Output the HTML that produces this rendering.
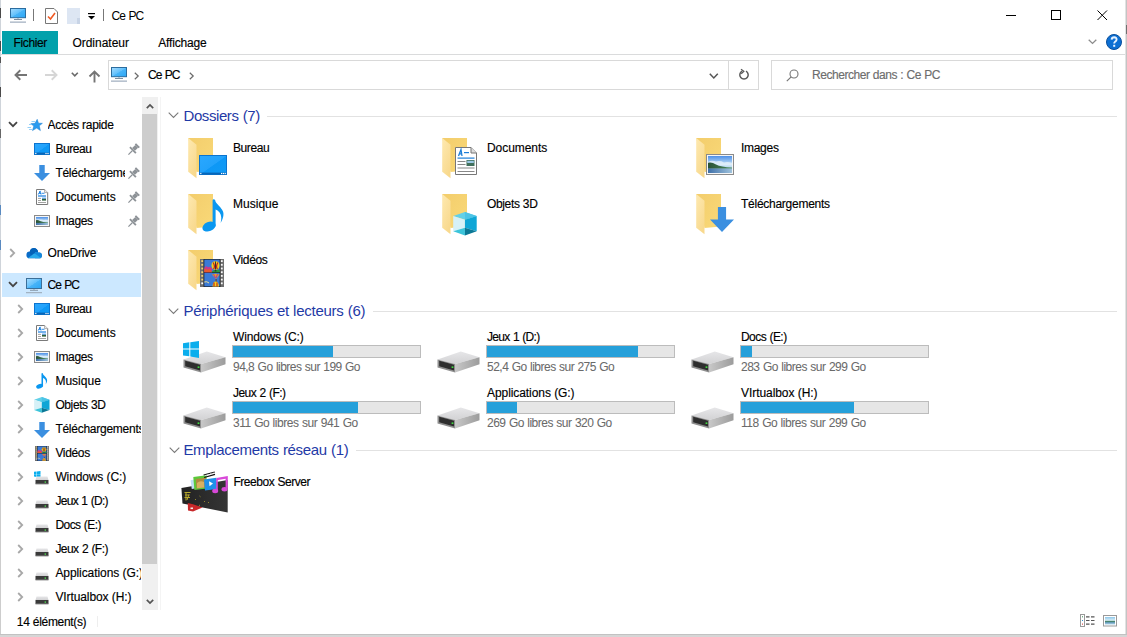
<!DOCTYPE html>
<html><head><meta charset="utf-8">
<style>
html,body{margin:0;padding:0;}
body{width:1127px;height:637px;overflow:hidden;position:relative;background:#fff;font-family:"Liberation Sans",sans-serif;}
.t{position:absolute;white-space:nowrap;-webkit-text-stroke:0.15px currentColor;}
.a{position:absolute;}
svg{position:absolute;overflow:visible;z-index:1;}
</style></head><body>
<!-- window borders -->
<div class="a" style="left:0;top:0;width:1px;height:637px;background:#cdcdcd"></div><div class="a" style="left:0;top:0;width:1px;height:300px;background:#cfd4da"></div>
<div class="a" style="left:0;top:8px;width:1px;height:10px;background:#4a4a4a"></div>
<div class="a" style="left:0;top:41px;width:1px;height:10px;background:#4a4a4a"></div>
<div class="a" style="left:0;top:57px;width:1px;height:6px;background:#555"></div>
<div class="a" style="left:0;top:87px;width:1px;height:10px;background:#4a4a4a"></div>
<div class="a" style="left:0;top:129px;width:1px;height:9px;background:#666"></div>
<div class="a" style="left:0;top:205px;width:1px;height:10px;background:#5a8ac0"></div>
<div class="a" style="left:0;top:240px;width:1px;height:10px;background:#5a8ac0"></div>
<div class="a" style="left:1125px;top:0;width:1px;height:637px;background:#e2e2e2"></div><div class="a" style="left:1126px;top:0;width:1px;height:637px;background:#c4c4c4"></div><div class="a" style="left:1126px;top:25px;width:1px;height:9px;background:#707070"></div>
<div class="a" style="left:0;top:634px;width:1127px;height:1px;background:#c2c2c2"></div><div class="a" style="left:0;top:635px;width:1127px;height:2px;background:#d6d6d6"></div>
<!-- title bar icons -->
<svg style="left:10px;top:8px" width="17" height="15" viewBox="0 0 17 15">
  <defs><linearGradient id="scr" x1="0" y1="0" x2="1" y2="1"><stop offset="0" stop-color="#a6dcff"/><stop offset="0.5" stop-color="#62c0fb"/><stop offset="0.52" stop-color="#48b4f8"/><stop offset="1" stop-color="#2aa6f5"/></linearGradient></defs>
  <rect x="0.5" y="0.5" width="15" height="9.2" fill="url(#scr)" stroke="#2b6c9e"/>
  <rect x="7" y="10.4" width="2" height="0.6" fill="#9fb0c0"/>
  <rect x="4" y="11" width="8" height="0.9" fill="#6f8295"/>
  <rect x="0" y="13.6" width="16" height="1" fill="#8a9bb0"/>
</svg>
<div class="a" style="left:33px;top:9px;width:1px;height:12px;background:#777"></div>
<svg style="left:45px;top:8px" width="13" height="16" viewBox="0 0 13 16">
  <path d="M0.5 0.5H9L12.5 4V15.5H0.5Z" fill="#fff" stroke="#777"/>
  <path d="M3 8.5L5.5 11L10 5" fill="none" stroke="#f05a24" stroke-width="1.6"/>
</svg>
<svg style="left:67px;top:8px" width="14" height="16" viewBox="0 0 14 16">
  <rect x="0" y="0" width="13" height="16" fill="#dde6f3"/>
  <rect x="10" y="10" width="3" height="6" fill="#c8d4e6"/>
</svg>
<svg style="left:88px;top:13px" width="8" height="8" viewBox="0 0 8 8">
  <rect x="0" y="0" width="7" height="1.2" fill="#000"/>
  <path d="M0 3H7L3.5 6.5Z" fill="#000"/>
</svg>
<div class="a" style="left:103px;top:9px;width:1px;height:12px;background:#777"></div>
<!-- window controls -->
<div class="a" style="left:1006px;top:15px;width:10px;height:1px;background:#000"></div>
<div class="a" style="left:1051px;top:10px;width:8px;height:8px;border:1px solid #000"></div>
<svg style="left:1097px;top:10px" width="11" height="11" viewBox="0 0 11 11"><path d="M0.5 0.5L10 10M10 0.5L0.5 10" stroke="#000" stroke-width="1"/></svg>
<!-- ribbon -->
<div class="a" style="left:2px;top:31px;width:56px;height:23px;background:#02a1ab"></div>
<div class="a" style="left:1px;top:54px;width:1124px;height:1px;background:#dadbdc"></div>
<svg style="left:1087.5px;top:38.6px" width="10" height="6" viewBox="0 0 10 6"><path d="M0.7 0.7L4.5 4.4L8.3 0.7" fill="none" stroke="#8c8c8c" stroke-width="1.3"/></svg>
<svg style="left:1106px;top:34px" width="16" height="16" viewBox="0 0 16 16">
  <circle cx="8" cy="8" r="7.5" fill="#0d6fd3" stroke="#0a4f9c" stroke-width="1"/>
  <path d="M5.6 5.6Q5.8 3.2 8.2 3.2Q10.6 3.3 10.6 5.5Q10.6 7 8.9 7.9Q8.2 8.4 8.2 9.6" fill="none" stroke="#e6f2ff" stroke-width="1.9"/>
  <rect x="7.2" y="10.8" width="2" height="2" fill="#e6f2ff"/>
</svg>
<!-- address bar -->
<svg style="left:14px;top:69px" width="14" height="12" viewBox="0 0 14 12"><path d="M13 6H2M6.3 1.3L1.5 6L6.3 10.7" fill="none" stroke="#757575" stroke-width="1.9"/></svg>
<svg style="left:44px;top:69px" width="14" height="12" viewBox="0 0 14 12"><path d="M1 6H12M7.7 1.3L12.5 6L7.7 10.7" fill="none" stroke="#d6d6d6" stroke-width="1.9"/></svg>
<svg style="left:71px;top:72px" width="8" height="5" viewBox="0 0 8 5"><path d="M0.8 0.8L3.8 3.8L6.8 0.8" fill="none" stroke="#6a6a6a" stroke-width="1.6"/></svg>
<svg style="left:88px;top:69.5px" width="13" height="13" viewBox="0 0 13 13"><path d="M6.5 12.4V2M1.5 6.5L6.5 1.5L11.5 6.5" fill="none" stroke="#757575" stroke-width="1.9"/></svg>
<div class="a" style="left:108px;top:60px;width:649px;height:28px;border:1px solid #d9d9d9"></div>
<div class="a" style="left:728px;top:61px;width:1px;height:28px;background:#d9d9d9"></div>
<svg style="left:111px;top:67px" width="17" height="15" viewBox="0 0 17 15">
  <rect x="0.5" y="0.5" width="15" height="9.2" fill="url(#scr)" stroke="#2b6c9e"/>
  <rect x="7" y="10.4" width="2" height="0.6" fill="#9fb0c0"/>
  <rect x="4" y="11" width="8" height="0.9" fill="#6f8295"/>
  <rect x="0" y="13.6" width="16" height="1" fill="#8a9bb0"/>
</svg>
<svg style="left:134px;top:72px" width="6" height="8" viewBox="0 0 6 8"><path d="M0.8 0.8L4.2 4L0.8 7.2" fill="none" stroke="#6a6a6a" stroke-width="1.2"/></svg>
<svg style="left:189px;top:72px" width="6" height="8" viewBox="0 0 6 8"><path d="M0.8 0.8L4.2 4L0.8 7.2" fill="none" stroke="#6a6a6a" stroke-width="1.2"/></svg>
<svg style="left:709px;top:73px" width="10" height="6" viewBox="0 0 10 6"><path d="M0.8 0.8L4.8 5L8.8 0.8" fill="none" stroke="#555" stroke-width="1.5"/></svg>
<svg style="left:738px;top:69px" width="12" height="12" viewBox="0 0 12 12"><path d="M4 2.2A4.2 4.2 0 1 0 8 2.2" fill="none" stroke="#5a5a5a" stroke-width="1.5"/><path d="M3 0.3L5.8 2.3L3.2 4.8" fill="none" stroke="#5a5a5a" stroke-width="1.3"/></svg>
<div class="a" style="left:771px;top:60px;width:340px;height:28px;border:1px solid #d9d9d9"></div>
<svg style="left:786px;top:69px" width="13" height="13" viewBox="0 0 13 13"><circle cx="8" cy="5" r="4" fill="none" stroke="#777" stroke-width="1.1"/><path d="M5.2 7.8L0.8 12.2" stroke="#777" stroke-width="1.2"/></svg>
<!-- nav pane scrollbar -->
<div class="a" style="left:142px;top:97px;width:16px;height:513px;background:#f0f0f0"></div>
<div class="a" style="left:142px;top:113.5px;width:15px;height:450px;background:#cdcdcd"></div>
<svg style="left:146px;top:103.5px" width="8" height="5" viewBox="0 0 8 5"><path d="M0.8 4.2L4 1L7.2 4.2" fill="none" stroke="#555" stroke-width="1.7"/></svg>
<svg style="left:146px;top:599px" width="8" height="5" viewBox="0 0 8 5"><path d="M0.8 0.8L4 4L7.2 0.8" fill="none" stroke="#555" stroke-width="1.7"/></svg>
<div class="a" style="left:160px;top:97px;width:1px;height:513px;background:#f4f4f4"></div>
<!-- selection -->
<div class="a" style="left:2px;top:273px;width:139px;height:24px;background:#cce8ff"></div>
<!-- status bar -->
<div class="a" style="left:97px;top:616px;width:1px;height:11px;background:#eeeeee"></div>
<svg width="0" height="0" style="left:0;top:0"><defs>
<linearGradient id="fback" x1="0" y1="0" x2="1" y2="1"><stop offset="0" stop-color="#f3cd6c"/><stop offset="1" stop-color="#f9d978"/></linearGradient>
<linearGradient id="ffront" x1="0" y1="0" x2="0.6" y2="1"><stop offset="0" stop-color="#fee9b0"/><stop offset="1" stop-color="#f8d98e"/></linearGradient>
<linearGradient id="blue" x1="0" y1="0" x2="1" y2="1"><stop offset="0" stop-color="#2aa8ff"/><stop offset="0.5" stop-color="#22a2fb"/><stop offset="0.52" stop-color="#0e98f6"/><stop offset="1" stop-color="#0f9af4"/></linearGradient>
<linearGradient id="land" x1="0" y1="0" x2="0" y2="1"><stop offset="0" stop-color="#8ec7ea"/><stop offset="0.45" stop-color="#d9eef7"/><stop offset="0.55" stop-color="#3d7b55"/><stop offset="0.75" stop-color="#6aa0c0"/><stop offset="1" stop-color="#b6d6ea"/></linearGradient>
<linearGradient id="sky" x1="0" y1="0" x2="0" y2="1"><stop offset="0" stop-color="#4d90e8"/><stop offset="0.45" stop-color="#b8d8f4"/><stop offset="1" stop-color="#d8eaf6"/></linearGradient><linearGradient id="hill" x1="0" y1="0" x2="1" y2="0"><stop offset="0" stop-color="#2a5236"/><stop offset="1" stop-color="#4a8a5a"/></linearGradient><linearGradient id="water" x1="0" y1="0" x2="1" y2="0"><stop offset="0" stop-color="#3e6fa8"/><stop offset="1" stop-color="#9fc2dc"/></linearGradient>
<linearGradient id="dtop" x1="0" y1="0" x2="0" y2="1"><stop offset="0" stop-color="#e6e6e8"/><stop offset="1" stop-color="#d2d2d4"/></linearGradient>
<linearGradient id="dside" x1="0" y1="0" x2="1" y2="0"><stop offset="0" stop-color="#c8c8c8"/><stop offset="1" stop-color="#9c9c9c"/></linearGradient>
<linearGradient id="cloud" x1="0" y1="0" x2="0" y2="1"><stop offset="0" stop-color="#0364b8"/><stop offset="1" stop-color="#1490df"/></linearGradient>
</defs></svg>
<svg style="left:8px;top:121.3px" width="10" height="7" viewBox="0 0 10 7"><path d="M1 1.2L5 5.2L9 1.2" fill="none" stroke="#454545" stroke-width="1.8"/></svg>
<svg style="left:27px;top:119px" width="16" height="13" viewBox="0 0 16 13"><path d="M10.2 0.3L11.5 4.2L15.4 4.3L12.3 6.8L13.4 11.6L9.7 9.1L5.5 11.6L6.8 7.1L3.8 4.7L8 4.3Z" fill="#2a9bef" stroke="#1d7fd0" stroke-width="0.5"/><path d="M4.5 2.5H8M2 5.5H5M0.5 8.5H4M2 10.5H5" stroke="#7cc4f5" stroke-width="0.8"/></svg>
<svg style="left:34px;top:143px" width="16" height="12" viewBox="0 0 16 12"><rect x="0.5" y="0.5" width="15" height="11" fill="url(#blue)" stroke="#0b74cf"/><rect x="1" y="9.6" width="14" height="1.9" fill="#0866b8"/><rect x="1.2" y="9.9" width="1.2" height="1.2" fill="#fff"/><rect x="11.4" y="9.9" width="1.2" height="1.2" fill="#fff"/><rect x="13.4" y="9.9" width="1.2" height="1.2" fill="#fff"/></svg>
<svg style="left:125.5px;top:143.0px" width="14" height="14" viewBox="0 0 14 14"><g transform="rotate(45 7 7)" fill="#8d9297"><rect x="4.3" y="0" width="5.4" height="1.8"/><rect x="5" y="1.8" width="4" height="4.4"/><rect x="2.8" y="6.2" width="8.4" height="1.8"/><rect x="6.4" y="8" width="1.2" height="5.5"/></g></svg>
<svg style="left:34px;top:165px" width="16" height="16" viewBox="0 0 16 16"><path d="M5.279999999999999 0H10.72V8.0H16L8.0 16L0 8.0H5.279999999999999Z" fill="#3b8fe0"/></svg>
<svg style="left:125.5px;top:167.0px" width="14" height="14" viewBox="0 0 14 14"><g transform="rotate(45 7 7)" fill="#8d9297"><rect x="4.3" y="0" width="5.4" height="1.8"/><rect x="5" y="1.8" width="4" height="4.4"/><rect x="2.8" y="6.2" width="8.4" height="1.8"/><rect x="6.4" y="8" width="1.2" height="5.5"/></g></svg>
<svg style="left:36px;top:189px" width="12.5" height="16" viewBox="0 0 12.5 16"><path d="M0.5 0.5H8.6L11.7 3.6V15.5H0.5Z" fill="#fff" stroke="#7a7a7a"/><path d="M8.6 0.5V3.6H11.7" fill="#eee" stroke="#9a9a9a" stroke-width="0.8"/><path d="M2.2 5.5L4.6 1.8M3.6 2L5 5.5M2.8 4.2H4.6" stroke="#1a7fe0" stroke-width="1" fill="none"/><rect x="5.5" y="3.8" width="3" height="0.9" fill="#1a7fe0"/><rect x="2" y="6.4" width="8" height="1.2" fill="#1a7fe0"/><rect x="2" y="8.9" width="3" height="0.9" fill="#999"/><rect x="2" y="11" width="3" height="0.9" fill="#999"/><rect x="6" y="8.6" width="4" height="1.2" fill="#5aa0f0"/><rect x="6" y="9.8" width="4" height="1.8" fill="#2f5f3a"/><rect x="2" y="13" width="8" height="0.9" fill="#999"/></svg>
<svg style="left:125.5px;top:191.0px" width="14" height="14" viewBox="0 0 14 14"><g transform="rotate(45 7 7)" fill="#8d9297"><rect x="4.3" y="0" width="5.4" height="1.8"/><rect x="5" y="1.8" width="4" height="4.4"/><rect x="2.8" y="6.2" width="8.4" height="1.8"/><rect x="6.4" y="8" width="1.2" height="5.5"/></g></svg>
<svg style="left:34px;top:215px" width="16" height="12" viewBox="0 0 16 12"><rect x="0.5" y="0.5" width="15" height="11" fill="#f6f6f6" stroke="#8a8a8a"/><g transform="translate(2 2) scale(1.0,1.0)"><rect x="0" y="0" width="12" height="8" fill="url(#sky)"/><path d="M0 2.8Q2 1.8 4 2.6Q6 2 8 3Q10 2.6 12 3.2V4.5H0Z" fill="#e6f1fa" opacity="0.8"/><path d="M0 3.2Q2 2.8 4 4Q6.5 5.2 12 5.4V6H0Z" fill="url(#hill)"/><rect x="0" y="5.9" width="12" height="2.1" fill="url(#water)"/></g></svg>
<svg style="left:125.5px;top:215.0px" width="14" height="14" viewBox="0 0 14 14"><g transform="rotate(45 7 7)" fill="#8d9297"><rect x="4.3" y="0" width="5.4" height="1.8"/><rect x="5" y="1.8" width="4" height="4.4"/><rect x="2.8" y="6.2" width="8.4" height="1.8"/><rect x="6.4" y="8" width="1.2" height="5.5"/></g></svg>
<svg style="left:8.9px;top:248.1px" width="7" height="10" viewBox="0 0 7 10"><path d="M1.2 1L5.2 5L1.2 9" fill="none" stroke="#a8a8a8" stroke-width="1.8"/></svg>
<svg style="left:26px;top:247.5px" width="17" height="11" viewBox="0 0 17 11"><defs><clipPath id="cc"><circle cx="3.8" cy="6.9" r="3.4"/><circle cx="7.9" cy="4.3" r="4.2"/><circle cx="13" cy="7.4" r="2.9"/><rect x="3.8" y="6" width="9.2" height="4.3"/></clipPath></defs><g clip-path="url(#cc)"><rect x="0" y="0" width="17" height="11" fill="#0a6cc8"/><circle cx="8" cy="4.3" r="4.2" fill="#0562b8"/><rect x="9" y="4" width="8" height="7" fill="#1488dc"/><path d="M1.5 10.5L8.4 5.2L15.5 10.5Z" fill="#28a8ea"/></g></svg>
<svg style="left:8px;top:281.3px" width="10" height="7" viewBox="0 0 10 7"><path d="M1 1.2L5 5.2L9 1.2" fill="none" stroke="#454545" stroke-width="1.8"/></svg>
<svg style="left:26px;top:277.5px" width="17" height="16" viewBox="0 0 17 16"><rect x="0.5" y="0.5" width="15" height="10" fill="url(#scr)" stroke="#3b6f99"/><rect x="7" y="11.2" width="2" height="0.6" fill="#9fb0c0"/><rect x="4" y="11.8" width="8" height="0.9" fill="#7e8f9f"/><rect x="0" y="14.2" width="16" height="1" fill="#98a6b4"/></svg>
<svg style="left:16.9px;top:304.1px" width="7" height="10" viewBox="0 0 7 10"><path d="M1.2 1L5.2 5L1.2 9" fill="none" stroke="#a8a8a8" stroke-width="1.8"/></svg>
<svg style="left:16.9px;top:328.1px" width="7" height="10" viewBox="0 0 7 10"><path d="M1.2 1L5.2 5L1.2 9" fill="none" stroke="#a8a8a8" stroke-width="1.8"/></svg>
<svg style="left:16.9px;top:352.1px" width="7" height="10" viewBox="0 0 7 10"><path d="M1.2 1L5.2 5L1.2 9" fill="none" stroke="#a8a8a8" stroke-width="1.8"/></svg>
<svg style="left:16.9px;top:376.1px" width="7" height="10" viewBox="0 0 7 10"><path d="M1.2 1L5.2 5L1.2 9" fill="none" stroke="#a8a8a8" stroke-width="1.8"/></svg>
<svg style="left:16.9px;top:400.1px" width="7" height="10" viewBox="0 0 7 10"><path d="M1.2 1L5.2 5L1.2 9" fill="none" stroke="#a8a8a8" stroke-width="1.8"/></svg>
<svg style="left:16.9px;top:424.1px" width="7" height="10" viewBox="0 0 7 10"><path d="M1.2 1L5.2 5L1.2 9" fill="none" stroke="#a8a8a8" stroke-width="1.8"/></svg>
<svg style="left:16.9px;top:448.1px" width="7" height="10" viewBox="0 0 7 10"><path d="M1.2 1L5.2 5L1.2 9" fill="none" stroke="#a8a8a8" stroke-width="1.8"/></svg>
<svg style="left:16.9px;top:472.1px" width="7" height="10" viewBox="0 0 7 10"><path d="M1.2 1L5.2 5L1.2 9" fill="none" stroke="#a8a8a8" stroke-width="1.8"/></svg>
<svg style="left:16.9px;top:496.1px" width="7" height="10" viewBox="0 0 7 10"><path d="M1.2 1L5.2 5L1.2 9" fill="none" stroke="#a8a8a8" stroke-width="1.8"/></svg>
<svg style="left:16.9px;top:520.1px" width="7" height="10" viewBox="0 0 7 10"><path d="M1.2 1L5.2 5L1.2 9" fill="none" stroke="#a8a8a8" stroke-width="1.8"/></svg>
<svg style="left:16.9px;top:544.1px" width="7" height="10" viewBox="0 0 7 10"><path d="M1.2 1L5.2 5L1.2 9" fill="none" stroke="#a8a8a8" stroke-width="1.8"/></svg>
<svg style="left:16.9px;top:568.1px" width="7" height="10" viewBox="0 0 7 10"><path d="M1.2 1L5.2 5L1.2 9" fill="none" stroke="#a8a8a8" stroke-width="1.8"/></svg>
<svg style="left:16.9px;top:592.1px" width="7" height="10" viewBox="0 0 7 10"><path d="M1.2 1L5.2 5L1.2 9" fill="none" stroke="#a8a8a8" stroke-width="1.8"/></svg>
<svg style="left:34px;top:303px" width="16" height="12" viewBox="0 0 16 12"><rect x="0.5" y="0.5" width="15" height="11" fill="url(#blue)" stroke="#0b74cf"/><rect x="1" y="9.6" width="14" height="1.9" fill="#0866b8"/><rect x="1.2" y="9.9" width="1.2" height="1.2" fill="#fff"/><rect x="11.4" y="9.9" width="1.2" height="1.2" fill="#fff"/><rect x="13.4" y="9.9" width="1.2" height="1.2" fill="#fff"/></svg>
<svg style="left:36px;top:325px" width="12.5" height="16" viewBox="0 0 12.5 16"><path d="M0.5 0.5H8.6L11.7 3.6V15.5H0.5Z" fill="#fff" stroke="#7a7a7a"/><path d="M8.6 0.5V3.6H11.7" fill="#eee" stroke="#9a9a9a" stroke-width="0.8"/><path d="M2.2 5.5L4.6 1.8M3.6 2L5 5.5M2.8 4.2H4.6" stroke="#1a7fe0" stroke-width="1" fill="none"/><rect x="5.5" y="3.8" width="3" height="0.9" fill="#1a7fe0"/><rect x="2" y="6.4" width="8" height="1.2" fill="#1a7fe0"/><rect x="2" y="8.9" width="3" height="0.9" fill="#999"/><rect x="2" y="11" width="3" height="0.9" fill="#999"/><rect x="6" y="8.6" width="4" height="1.2" fill="#5aa0f0"/><rect x="6" y="9.8" width="4" height="1.8" fill="#2f5f3a"/><rect x="2" y="13" width="8" height="0.9" fill="#999"/></svg>
<svg style="left:34px;top:351px" width="16" height="12" viewBox="0 0 16 12"><rect x="0.5" y="0.5" width="15" height="11" fill="#f6f6f6" stroke="#8a8a8a"/><g transform="translate(2 2) scale(1.0,1.0)"><rect x="0" y="0" width="12" height="8" fill="url(#sky)"/><path d="M0 2.8Q2 1.8 4 2.6Q6 2 8 3Q10 2.6 12 3.2V4.5H0Z" fill="#e6f1fa" opacity="0.8"/><path d="M0 3.2Q2 2.8 4 4Q6.5 5.2 12 5.4V6H0Z" fill="url(#hill)"/><rect x="0" y="5.9" width="12" height="2.1" fill="url(#water)"/></g></svg>
<svg style="left:35.6px;top:373.2px" width="11.4" height="15.8" viewBox="0 0 11.4 15.8"><g transform="scale(0.5181818181818182,0.4787878787878788)"><ellipse cx="7" cy="27.6" rx="6.9" ry="4.6" fill="#0a97f0" transform="rotate(-22 7 27.6)"/><path d="M10.6 27.5V1.6Q10.6 0.2 12 0.2Q13.4 0.2 13.6 2.8C15 5.5 19 8 21 12.5C22.2 15.5 21 20.5 18.6 23.9C19.6 20 19.6 16.5 17.6 13.5C16.4 11.8 14.8 10.8 13.6 10.4V27.5Z" fill="#0a97f0"/></g></svg>
<svg style="left:33.7px;top:397px" width="16" height="16" viewBox="0 0 16 16"><g transform="scale(0.64,0.6666666666666666)"><path d="M0.2 4L12.2 0.1L24.2 4L12.2 7.8Z" fill="#62d0e8"/><path d="M12.2 0.1L24.2 4L12.2 7.8Z" fill="#4cc4e6"/><path d="M0.2 4L12.2 7.8V16L0.2 19.4Z" fill="#d6f1f7"/><path d="M12.2 7.8L24.2 4V19.4L12.2 16Z" fill="#0ea6d6"/><path d="M0.2 19.4L12.2 16V23.6Z" fill="#3cc4da"/><path d="M12.2 16L24.2 19.4L12.2 23.6Z" fill="#0b7896"/></g></svg>
<svg style="left:34px;top:421.5px" width="16" height="16" viewBox="0 0 16 16"><path d="M5.279999999999999 0H10.72V8.0H16L8.0 16L0 8.0H5.279999999999999Z" fill="#3b8fe0"/></svg>
<svg style="left:35px;top:446px" width="14" height="15" viewBox="0 0 14 15"><g transform="scale(0.5833333333333334,0.5357142857142857)"><rect x="0" y="0" width="24" height="28" fill="#6e6e6e"/><rect x="3.6" y="0" width="16.8" height="28" fill="#1a1a1a"/><rect x="1.3" y="1.2" width="1.8" height="1.8" fill="#f0d070"/><rect x="20.9" y="1.2" width="1.8" height="1.8" fill="#fafafa"/><rect x="1.3" y="4.9" width="1.8" height="1.8" fill="#f0d070"/><rect x="20.9" y="4.9" width="1.8" height="1.8" fill="#fafafa"/><rect x="1.3" y="8.6" width="1.8" height="1.8" fill="#f0d070"/><rect x="20.9" y="8.6" width="1.8" height="1.8" fill="#fafafa"/><rect x="1.3" y="12.3" width="1.8" height="1.8" fill="#f0d070"/><rect x="20.9" y="12.3" width="1.8" height="1.8" fill="#fafafa"/><rect x="1.3" y="16.0" width="1.8" height="1.8" fill="#f0d070"/><rect x="20.9" y="16.0" width="1.8" height="1.8" fill="#fafafa"/><rect x="1.3" y="19.7" width="1.8" height="1.8" fill="#f0d070"/><rect x="20.9" y="19.7" width="1.8" height="1.8" fill="#fafafa"/><rect x="1.3" y="23.400000000000002" width="1.8" height="1.8" fill="#fff"/><rect x="20.9" y="23.400000000000002" width="1.8" height="1.8" fill="#fafafa"/><rect x="4.3" y="0.6" width="15.4" height="12.6" fill="#3b7ad6"/><rect x="4.3" y="14" width="15.4" height="13.4" fill="#3b7ad6"/><path d="M4.3 9Q6 6 8 8.5Q10 6.5 12 9.5L12 13.2H4.3Z" fill="#c83a8a"/><path d="M4.3 10.5Q6 9 7 11L9 10Q11 11 12 13.2H4.3Z" fill="#e85a2a"/><path d="M11 13.2Q14 10 19.7 11V13.2Z" fill="#2a9a3a"/><ellipse cx="15.5" cy="6.5" rx="4" ry="4.2" fill="#f0d020"/><path d="M13.2 3.5Q15.5 8 13.5 10M17.8 3.5Q15.5 8 17.5 10" stroke="#c02020" stroke-width="1.2" fill="none"/><rect x="15" y="2.5" width="1" height="8" fill="#333"/><rect x="14.8" y="11" width="1.5" height="1.5" fill="#333"/><path d="M12 15.5Q15.5 14 19.5 15.5L16 20Z" fill="#e8a020"/><path d="M13.5 15.2L15.5 19M17.5 15.2L16 19" stroke="#a020c0" stroke-width="0.9"/><rect x="15.6" y="20" width="1" height="3" fill="#6a3a20"/><path d="M4.3 23Q7 22 9 24" stroke="#f0e090" stroke-width="1" fill="none"/><path d="M12.5 27.4Q13 22.5 15.5 22.5Q18.5 22.5 19 27.4Z" fill="#f0d020"/><path d="M14 23.5V27.4M17 23.5V27.4" stroke="#c02020" stroke-width="1.1"/></g></svg>
<svg style="left:33.8px;top:471px" width="6.5" height="6.6" viewBox="0 0 6.5 6.6"><g transform="scale(0.40625,0.388235294117647)"><path d="M0 2.2L6.3 1.3V7.6H0Z" fill="#0aaeed"/><path d="M7.3 1.2L16 0V7.6H7.3Z" fill="#0aaeed"/><path d="M0 8.6H6.3V15.3L0 14.5Z" fill="#0aaeed"/><path d="M7.3 8.6H16V17L7.3 15.5Z" fill="#0aaeed"/></g></svg>
<svg style="left:35px;top:476px" width="14" height="9" viewBox="0 0 14 9"><path d="M1.5 0.5H12.5L13.5 4H0.5Z" fill="url(#dtop)"/><rect x="0.5" y="4" width="13" height="4" fill="#3a3a3a"/><rect x="0.5" y="7.6" width="13" height="0.9" fill="#9a9a9a"/><rect x="9.6" y="5.4" width="1.4" height="1.4" fill="#4fd64f"/></svg>
<svg style="left:35px;top:500px" width="14" height="9" viewBox="0 0 14 9"><path d="M1.5 0.5H12.5L13.5 4H0.5Z" fill="url(#dtop)"/><rect x="0.5" y="4" width="13" height="4" fill="#3a3a3a"/><rect x="0.5" y="7.6" width="13" height="0.9" fill="#9a9a9a"/><rect x="9.6" y="5.4" width="1.4" height="1.4" fill="#4fd64f"/></svg>
<svg style="left:35px;top:524px" width="14" height="9" viewBox="0 0 14 9"><path d="M1.5 0.5H12.5L13.5 4H0.5Z" fill="url(#dtop)"/><rect x="0.5" y="4" width="13" height="4" fill="#3a3a3a"/><rect x="0.5" y="7.6" width="13" height="0.9" fill="#9a9a9a"/><rect x="9.6" y="5.4" width="1.4" height="1.4" fill="#4fd64f"/></svg>
<svg style="left:35px;top:548px" width="14" height="9" viewBox="0 0 14 9"><path d="M1.5 0.5H12.5L13.5 4H0.5Z" fill="url(#dtop)"/><rect x="0.5" y="4" width="13" height="4" fill="#3a3a3a"/><rect x="0.5" y="7.6" width="13" height="0.9" fill="#9a9a9a"/><rect x="9.6" y="5.4" width="1.4" height="1.4" fill="#4fd64f"/></svg>
<svg style="left:35px;top:572px" width="14" height="9" viewBox="0 0 14 9"><path d="M1.5 0.5H12.5L13.5 4H0.5Z" fill="url(#dtop)"/><rect x="0.5" y="4" width="13" height="4" fill="#3a3a3a"/><rect x="0.5" y="7.6" width="13" height="0.9" fill="#9a9a9a"/><rect x="9.6" y="5.4" width="1.4" height="1.4" fill="#4fd64f"/></svg>
<svg style="left:35px;top:596px" width="14" height="9" viewBox="0 0 14 9"><path d="M1.5 0.5H12.5L13.5 4H0.5Z" fill="url(#dtop)"/><rect x="0.5" y="4" width="13" height="4" fill="#3a3a3a"/><rect x="0.5" y="7.6" width="13" height="0.9" fill="#9a9a9a"/><rect x="9.6" y="5.4" width="1.4" height="1.4" fill="#4fd64f"/></svg>
<svg style="left:187.6px;top:138px" width="26" height="41" viewBox="0 0 26 41"><path d="M0.2 0H25V32.5L8.5 34Z" fill="url(#fback)"/><path d="M0.2 0L8.5 6.7V40.3L0.2 33.7Z" fill="url(#ffront)"/></svg>
<svg style="left:441.6px;top:138px" width="26" height="41" viewBox="0 0 26 41"><path d="M0.2 0H25V32.5L8.5 34Z" fill="url(#fback)"/><path d="M0.2 0L8.5 6.7V40.3L0.2 33.7Z" fill="url(#ffront)"/></svg>
<svg style="left:695.6px;top:138px" width="26" height="41" viewBox="0 0 26 41"><path d="M0.2 0H25V32.5L8.5 34Z" fill="url(#fback)"/><path d="M0.2 0L8.5 6.7V40.3L0.2 33.7Z" fill="url(#ffront)"/></svg>
<svg style="left:187.6px;top:194px" width="26" height="41" viewBox="0 0 26 41"><path d="M0.2 0H25V32.5L8.5 34Z" fill="url(#fback)"/><path d="M0.2 0L8.5 6.7V40.3L0.2 33.7Z" fill="url(#ffront)"/></svg>
<svg style="left:441.6px;top:194px" width="26" height="41" viewBox="0 0 26 41"><path d="M0.2 0H25V32.5L8.5 34Z" fill="url(#fback)"/><path d="M0.2 0L8.5 6.7V40.3L0.2 33.7Z" fill="url(#ffront)"/></svg>
<svg style="left:695.6px;top:194px" width="26" height="41" viewBox="0 0 26 41"><path d="M0.2 0H25V32.5L8.5 34Z" fill="url(#fback)"/><path d="M0.2 0L8.5 6.7V40.3L0.2 33.7Z" fill="url(#ffront)"/></svg>
<svg style="left:187.6px;top:250px" width="26" height="41" viewBox="0 0 26 41"><path d="M0.2 0H25V32.5L8.5 34Z" fill="url(#fback)"/><path d="M0.2 0L8.5 6.7V40.3L0.2 33.7Z" fill="url(#ffront)"/></svg>
<svg style="left:199px;top:155px" width="28" height="20" viewBox="0 0 28 20"><rect x="0.5" y="0.5" width="27" height="19" fill="url(#blue)" stroke="#0b74cf"/><rect x="1" y="17.6" width="26" height="1.9" fill="#0866b8"/><rect x="1.2" y="17.9" width="1.2" height="1.2" fill="#fff"/><rect x="22" y="17.9" width="1.2" height="1.2" fill="#fff"/><rect x="23.8" y="17.9" width="1.2" height="1.2" fill="#fff"/><rect x="25.6" y="17.9" width="1.2" height="1.2" fill="#fff"/></svg>
<svg style="left:201.5px;top:198.7px" width="22" height="33" viewBox="0 0 22 33"><g transform="scale(1.0,1.0)"><ellipse cx="7" cy="27.6" rx="6.9" ry="4.6" fill="#0a97f0" transform="rotate(-22 7 27.6)"/><path d="M10.6 27.5V1.6Q10.6 0.2 12 0.2Q13.4 0.2 13.6 2.8C15 5.5 19 8 21 12.5C22.2 15.5 21 20.5 18.6 23.9C19.6 20 19.6 16.5 17.6 13.5C16.4 11.8 14.8 10.8 13.6 10.4V27.5Z" fill="#0a97f0"/></g></svg>
<svg style="left:200px;top:259px" width="24" height="28" viewBox="0 0 24 28"><g transform="scale(1.0,1.0)"><rect x="0" y="0" width="24" height="28" fill="#6e6e6e"/><rect x="3.6" y="0" width="16.8" height="28" fill="#1a1a1a"/><rect x="1.3" y="1.2" width="1.8" height="1.8" fill="#f0d070"/><rect x="20.9" y="1.2" width="1.8" height="1.8" fill="#fafafa"/><rect x="1.3" y="4.9" width="1.8" height="1.8" fill="#f0d070"/><rect x="20.9" y="4.9" width="1.8" height="1.8" fill="#fafafa"/><rect x="1.3" y="8.6" width="1.8" height="1.8" fill="#f0d070"/><rect x="20.9" y="8.6" width="1.8" height="1.8" fill="#fafafa"/><rect x="1.3" y="12.3" width="1.8" height="1.8" fill="#f0d070"/><rect x="20.9" y="12.3" width="1.8" height="1.8" fill="#fafafa"/><rect x="1.3" y="16.0" width="1.8" height="1.8" fill="#f0d070"/><rect x="20.9" y="16.0" width="1.8" height="1.8" fill="#fafafa"/><rect x="1.3" y="19.7" width="1.8" height="1.8" fill="#f0d070"/><rect x="20.9" y="19.7" width="1.8" height="1.8" fill="#fafafa"/><rect x="1.3" y="23.400000000000002" width="1.8" height="1.8" fill="#fff"/><rect x="20.9" y="23.400000000000002" width="1.8" height="1.8" fill="#fafafa"/><rect x="4.3" y="0.6" width="15.4" height="12.6" fill="#3b7ad6"/><rect x="4.3" y="14" width="15.4" height="13.4" fill="#3b7ad6"/><path d="M4.3 9Q6 6 8 8.5Q10 6.5 12 9.5L12 13.2H4.3Z" fill="#c83a8a"/><path d="M4.3 10.5Q6 9 7 11L9 10Q11 11 12 13.2H4.3Z" fill="#e85a2a"/><path d="M11 13.2Q14 10 19.7 11V13.2Z" fill="#2a9a3a"/><ellipse cx="15.5" cy="6.5" rx="4" ry="4.2" fill="#f0d020"/><path d="M13.2 3.5Q15.5 8 13.5 10M17.8 3.5Q15.5 8 17.5 10" stroke="#c02020" stroke-width="1.2" fill="none"/><rect x="15" y="2.5" width="1" height="8" fill="#333"/><rect x="14.8" y="11" width="1.5" height="1.5" fill="#333"/><path d="M12 15.5Q15.5 14 19.5 15.5L16 20Z" fill="#e8a020"/><path d="M13.5 15.2L15.5 19M17.5 15.2L16 19" stroke="#a020c0" stroke-width="0.9"/><rect x="15.6" y="20" width="1" height="3" fill="#6a3a20"/><path d="M4.3 23Q7 22 9 24" stroke="#f0e090" stroke-width="1" fill="none"/><path d="M12.5 27.4Q13 22.5 15.5 22.5Q18.5 22.5 19 27.4Z" fill="#f0d020"/><path d="M14 23.5V27.4M17 23.5V27.4" stroke="#c02020" stroke-width="1.1"/></g></svg>
<svg style="left:454.5px;top:147px" width="22" height="28" viewBox="0 0 22 28"><path d="M0.5 0.5H16L21.5 6V27.5H0.5Z" fill="#fff" stroke="#777"/><path d="M16 0.5V6H21.5" fill="#ddd" stroke="#777"/><path d="M3.5 9L6 2.5L7 9M4.3 6.8H6.8" stroke="#1e7fd8" stroke-width="1.3" fill="none"/><rect x="9" y="5" width="5" height="1.2" fill="#1e7fd8"/><rect x="2.5" y="10.5" width="17" height="1.2" fill="#1e7fd8"/><rect x="2.5" y="14" width="8" height="1" fill="#888"/><rect x="11.5" y="13" width="8" height="6" fill="#41705c"/><rect x="12.2" y="13.8" width="6.6" height="2.2" fill="#9cc8e6"/><rect x="2.5" y="17" width="8" height="1" fill="#888"/><rect x="2.5" y="20.5" width="17" height="1" fill="#888"/><rect x="2.5" y="24" width="17" height="1" fill="#888"/></svg>
<svg style="left:452.8px;top:212px" width="24.5" height="23.8" viewBox="0 0 24.5 23.8"><g transform="scale(0.98,0.9916666666666667)"><path d="M0.2 4L12.2 0.1L24.2 4L12.2 7.8Z" fill="#62d0e8"/><path d="M12.2 0.1L24.2 4L12.2 7.8Z" fill="#4cc4e6"/><path d="M0.2 4L12.2 7.8V16L0.2 19.4Z" fill="#d6f1f7"/><path d="M12.2 7.8L24.2 4V19.4L12.2 16Z" fill="#0ea6d6"/><path d="M0.2 19.4L12.2 16V23.6Z" fill="#3cc4da"/><path d="M12.2 16L24.2 19.4L12.2 23.6Z" fill="#0b7896"/></g></svg>
<svg style="left:706px;top:154px" width="28" height="21" viewBox="0 0 28 21"><rect x="0.5" y="0.5" width="27" height="20" fill="#f6f6f6" stroke="#8a8a8a"/><g transform="translate(2 2) scale(2.0,2.125)"><rect x="0" y="0" width="12" height="8" fill="url(#sky)"/><path d="M0 2.8Q2 1.8 4 2.6Q6 2 8 3Q10 2.6 12 3.2V4.5H0Z" fill="#e6f1fa" opacity="0.8"/><path d="M0 3.2Q2 2.8 4 4Q6.5 5.2 12 5.4V6H0Z" fill="url(#hill)"/><rect x="0" y="5.9" width="12" height="2.1" fill="url(#water)"/></g></svg>
<svg style="left:709.5px;top:206.5px" width="24" height="25" viewBox="0 0 24 25"><path d="M7.92 0H16.08V12.5H24L12.0 25L0 12.5H7.92Z" fill="#3b8fe0"/></svg>
<svg style="left:182.5px;top:351px" width="44" height="23" viewBox="0 0 44 23"><path d="M0.5 8.4L23.8 0.6L42.5 6.3L18.1 13Z" fill="url(#dtop)"/><path d="M18.1 13L42.5 6.3V13.3L18.1 21.5Z" fill="url(#dside)"/><path d="M0.5 8.4L18.1 13V21.5L0.5 16.5Z" fill="#8e8e8e"/><path d="M2.2 9.7L17 13.8V19.5L2.2 15.3Z" fill="#2e2e2e"/><rect x="14.6" y="15.4" width="1.8" height="1.6" fill="#3fdc3f"/></svg>
<svg style="left:436.5px;top:351px" width="44" height="23" viewBox="0 0 44 23"><path d="M0.5 8.4L23.8 0.6L42.5 6.3L18.1 13Z" fill="url(#dtop)"/><path d="M18.1 13L42.5 6.3V13.3L18.1 21.5Z" fill="url(#dside)"/><path d="M0.5 8.4L18.1 13V21.5L0.5 16.5Z" fill="#8e8e8e"/><path d="M2.2 9.7L17 13.8V19.5L2.2 15.3Z" fill="#2e2e2e"/><rect x="14.6" y="15.4" width="1.8" height="1.6" fill="#3fdc3f"/></svg>
<svg style="left:690.5px;top:351px" width="44" height="23" viewBox="0 0 44 23"><path d="M0.5 8.4L23.8 0.6L42.5 6.3L18.1 13Z" fill="url(#dtop)"/><path d="M18.1 13L42.5 6.3V13.3L18.1 21.5Z" fill="url(#dside)"/><path d="M0.5 8.4L18.1 13V21.5L0.5 16.5Z" fill="#8e8e8e"/><path d="M2.2 9.7L17 13.8V19.5L2.2 15.3Z" fill="#2e2e2e"/><rect x="14.6" y="15.4" width="1.8" height="1.6" fill="#3fdc3f"/></svg>
<svg style="left:182.5px;top:407px" width="44" height="23" viewBox="0 0 44 23"><path d="M0.5 8.4L23.8 0.6L42.5 6.3L18.1 13Z" fill="url(#dtop)"/><path d="M18.1 13L42.5 6.3V13.3L18.1 21.5Z" fill="url(#dside)"/><path d="M0.5 8.4L18.1 13V21.5L0.5 16.5Z" fill="#8e8e8e"/><path d="M2.2 9.7L17 13.8V19.5L2.2 15.3Z" fill="#2e2e2e"/><rect x="14.6" y="15.4" width="1.8" height="1.6" fill="#3fdc3f"/></svg>
<svg style="left:436.5px;top:407px" width="44" height="23" viewBox="0 0 44 23"><path d="M0.5 8.4L23.8 0.6L42.5 6.3L18.1 13Z" fill="url(#dtop)"/><path d="M18.1 13L42.5 6.3V13.3L18.1 21.5Z" fill="url(#dside)"/><path d="M0.5 8.4L18.1 13V21.5L0.5 16.5Z" fill="#8e8e8e"/><path d="M2.2 9.7L17 13.8V19.5L2.2 15.3Z" fill="#2e2e2e"/><rect x="14.6" y="15.4" width="1.8" height="1.6" fill="#3fdc3f"/></svg>
<svg style="left:690.5px;top:407px" width="44" height="23" viewBox="0 0 44 23"><path d="M0.5 8.4L23.8 0.6L42.5 6.3L18.1 13Z" fill="url(#dtop)"/><path d="M18.1 13L42.5 6.3V13.3L18.1 21.5Z" fill="url(#dside)"/><path d="M0.5 8.4L18.1 13V21.5L0.5 16.5Z" fill="#8e8e8e"/><path d="M2.2 9.7L17 13.8V19.5L2.2 15.3Z" fill="#2e2e2e"/><rect x="14.6" y="15.4" width="1.8" height="1.6" fill="#3fdc3f"/></svg>
<svg style="left:183px;top:341px" width="16" height="17" viewBox="0 0 16 17"><g transform="scale(1.0,1.0)"><path d="M0 2.2L6.3 1.3V7.6H0Z" fill="#0aaeed"/><path d="M7.3 1.2L16 0V7.6H7.3Z" fill="#0aaeed"/><path d="M0 8.6H6.3V15.3L0 14.5Z" fill="#0aaeed"/><path d="M7.3 8.6H16V17L7.3 15.5Z" fill="#0aaeed"/></g></svg>
<div class="a" style="left:232px;top:345px;width:187px;height:11px;border:1px solid #bcbcbc;background:#e6e6e6"></div>
<div class="a" style="left:233px;top:346px;width:100px;height:11px;background:#26a0da"></div>
<div class="a" style="left:486px;top:345px;width:187px;height:11px;border:1px solid #bcbcbc;background:#e6e6e6"></div>
<div class="a" style="left:487px;top:346px;width:151px;height:11px;background:#26a0da"></div>
<div class="a" style="left:740px;top:345px;width:187px;height:11px;border:1px solid #bcbcbc;background:#e6e6e6"></div>
<div class="a" style="left:741px;top:346px;width:11px;height:11px;background:#26a0da"></div>
<div class="a" style="left:232px;top:401px;width:187px;height:11px;border:1px solid #bcbcbc;background:#e6e6e6"></div>
<div class="a" style="left:233px;top:402px;width:125px;height:11px;background:#26a0da"></div>
<div class="a" style="left:486px;top:401px;width:187px;height:11px;border:1px solid #bcbcbc;background:#e6e6e6"></div>
<div class="a" style="left:487px;top:402px;width:30px;height:11px;background:#26a0da"></div>
<div class="a" style="left:740px;top:401px;width:187px;height:11px;border:1px solid #bcbcbc;background:#e6e6e6"></div>
<div class="a" style="left:741px;top:402px;width:113px;height:11px;background:#26a0da"></div>
<div class="a" style="left:167px;top:112px;width:10px;height:6px"></div>
<svg style="left:168px;top:112px" width="11" height="7" viewBox="0 0 11 7"><path d="M0.7 0.7L5.5 5.5L10.3 0.7" fill="none" stroke="#7a7a7a" stroke-width="1.1"/></svg>
<div class="a" style="left:267px;top:116px;width:850px;height:1px;background:#e2e2e2"></div>
<svg style="left:168px;top:307.5px" width="11" height="7" viewBox="0 0 11 7"><path d="M0.7 0.7L5.5 5.5L10.3 0.7" fill="none" stroke="#7a7a7a" stroke-width="1.1"/></svg>
<div class="a" style="left:373px;top:311px;width:744px;height:1px;background:#e2e2e2"></div>
<svg style="left:168.5px;top:447px" width="11" height="7" viewBox="0 0 11 7"><path d="M0.7 0.7L5.5 5.5L10.3 0.7" fill="none" stroke="#7a7a7a" stroke-width="1.1"/></svg>
<div class="a" style="left:356px;top:450px;width:761px;height:1px;background:#e2e2e2"></div>
<svg style="left:181px;top:471px" width="48" height="43" viewBox="0 0 48 43"><defs><linearGradient id="fbx" x1="0" y1="0" x2="1" y2="0"><stop offset="0" stop-color="#222"/><stop offset="1" stop-color="#353535"/></linearGradient></defs><path d="M0.4 17L46.7 9V41.5L1.5 32.4Z" fill="url(#fbx)"/><path d="M3.5 21.5H9.5M4 24H8.5M3.5 26.5H9M5 22V29.5M8 23.5L6 29" stroke="#b8a82a" stroke-width="1" fill="none"/><path d="M18.5 25l1 0.8M14 28l1 1M23 30l1 1M18 34l1 0.7M27 32l1-1" stroke="#9a9030" stroke-width="0.9"/><path d="M6.8 32L12 33.2L21.5 36.5L12 40.5L7 39.5Z" fill="#c8282a"/><rect x="9.5" y="36.5" width="2.5" height="1.6" fill="#f0f0f0"/><path d="M9.6 9.3L13.6 8.5L14 17.5L10.8 17.9Z" fill="#bfe0f5"/><path d="M12.3 6L25.5 4.2L25.8 17.5L13.4 19Z" fill="#5cc83a"/><path d="M14.8 8L25 6.8V16.3L15.5 17.4Z" fill="#b08a40"/><path d="M16 12Q19 9 23 11V16.5L16 17.3Z" fill="#d8b060"/><path d="M22.6 4L33.8 1M23.2 6.5L34 3.3" stroke="#111" stroke-width="1.2"/><path d="M24 4.6L33 2" stroke="#e8e8e8" stroke-width="0.8" stroke-dasharray="1.3 1.3"/><path d="M23 8.5L35.5 6.8L36 18L24 19.5Z" fill="#1e90ea"/><path d="M28 10.3L32 12.6L28.5 15.2Z" fill="#fff"/><path d="M35.6 8.2L45.7 6.3V17.5" fill="none" stroke="#d848d8" stroke-width="2.2"/><path d="M36 8V19" stroke="#d848d8" stroke-width="1.6"/><ellipse cx="34.2" cy="20" rx="3" ry="2.2" fill="#d848d8"/><ellipse cx="43.5" cy="18.3" rx="3" ry="2.2" fill="#d848d8"/></svg>
<svg style="left:1080px;top:614px" width="17" height="13" viewBox="0 0 17 13"><rect x="0.5" y="0.5" width="4" height="12" fill="#fff" stroke="#999"/><rect x="2" y="2.3" width="1" height="1" fill="#2f8f4f"/><rect x="2" y="6" width="1" height="1" fill="#2f8fd0"/><rect x="2" y="9.6" width="1" height="1" fill="#d03030"/><path d="M6 2.8H9.5M11 2.8H14.5M6 6.5H9.5M11 6.5H14.5M6 10.2H9.5M11 10.2H14.5" stroke="#555" stroke-width="1.2"/></svg>
<svg style="left:1103px;top:614.5px" width="15" height="12" viewBox="0 0 15 12"><rect x="0.5" y="0.5" width="13" height="10.5" fill="#fff" stroke="#999"/><rect x="2" y="2" width="10" height="7.5" fill="url(#land)"/></svg>

<div class="t" style="left:111.6px;top:8.84px;font-size:12px;line-height:15px;color:#000;letter-spacing:-0.936px;word-spacing:0.936px;-webkit-text-stroke:0;">Ce PC</div>
<div class="t" style="left:13.5px;top:36.34px;font-size:12px;line-height:15px;color:#000;letter-spacing:-0.359px;word-spacing:0.359px;">Fichier</div>
<div class="t" style="left:72.4px;top:36.34px;font-size:12px;line-height:15px;color:#000;letter-spacing:-0.010px;word-spacing:0.010px;">Ordinateur</div>
<div class="t" style="left:158.2px;top:36.34px;font-size:12px;line-height:15px;color:#000;letter-spacing:-0.170px;word-spacing:0.170px;">Affichage</div>
<div class="t" style="left:148px;top:68.34px;font-size:12px;line-height:15px;color:#000;letter-spacing:-0.936px;word-spacing:0.936px;">Ce PC</div>
<div class="t" style="left:812px;top:68.34px;font-size:12px;line-height:15px;color:#6d6d6d;letter-spacing:-0.460px;word-spacing:0.460px;">Rechercher dans : Ce PC</div>
<div class="t" style="left:47.6px;top:118.34px;font-size:12px;line-height:15px;color:#000;letter-spacing:-0.307px;word-spacing:0.307px;width:93.4px;overflow:hidden;">Accès rapide</div>
<div class="t" style="left:55.4px;top:142.34px;font-size:12px;line-height:15px;color:#000;letter-spacing:-0.417px;word-spacing:0.417px;width:69.6px;overflow:hidden;">Bureau</div>
<div class="t" style="left:55.4px;top:166.34px;font-size:12px;line-height:15px;color:#000;letter-spacing:-0.261px;word-spacing:0.261px;width:69.6px;overflow:hidden;">Téléchargements</div>
<div class="t" style="left:55.4px;top:190.34px;font-size:12px;line-height:15px;color:#000;letter-spacing:-0.056px;word-spacing:0.056px;width:69.6px;overflow:hidden;">Documents</div>
<div class="t" style="left:55.4px;top:214.34px;font-size:12px;line-height:15px;color:#000;letter-spacing:-0.327px;word-spacing:0.327px;width:69.6px;overflow:hidden;">Images</div>
<div class="t" style="left:47.6px;top:246.34px;font-size:12px;line-height:15px;color:#000;letter-spacing:-0.261px;word-spacing:0.261px;width:93.4px;overflow:hidden;">OneDrive</div>
<div class="t" style="left:47.6px;top:278.34px;font-size:12px;line-height:15px;color:#000;letter-spacing:-1.036px;word-spacing:1.036px;width:93.4px;overflow:hidden;">Ce PC</div>
<div class="t" style="left:55.4px;top:302.34px;font-size:12px;line-height:15px;color:#000;letter-spacing:-0.417px;word-spacing:0.417px;width:85.6px;overflow:hidden;">Bureau</div>
<div class="t" style="left:55.4px;top:326.34px;font-size:12px;line-height:15px;color:#000;letter-spacing:-0.056px;word-spacing:0.056px;width:85.6px;overflow:hidden;">Documents</div>
<div class="t" style="left:55.4px;top:350.34px;font-size:12px;line-height:15px;color:#000;letter-spacing:-0.327px;word-spacing:0.327px;width:85.6px;overflow:hidden;">Images</div>
<div class="t" style="left:55.4px;top:374.34px;font-size:12px;line-height:15px;color:#000;letter-spacing:0.020px;word-spacing:-0.020px;width:85.6px;overflow:hidden;">Musique</div>
<div class="t" style="left:55.4px;top:398.34px;font-size:12px;line-height:15px;color:#000;letter-spacing:-0.395px;word-spacing:0.395px;width:85.6px;overflow:hidden;">Objets 3D</div>
<div class="t" style="left:55.4px;top:422.34px;font-size:12px;line-height:15px;color:#000;letter-spacing:-0.261px;word-spacing:0.261px;width:85.6px;overflow:hidden;">Téléchargements</div>
<div class="t" style="left:55.4px;top:446.34px;font-size:12px;line-height:15px;color:#000;letter-spacing:-0.331px;word-spacing:0.331px;width:85.6px;overflow:hidden;">Vidéos</div>
<div class="t" style="left:55.4px;top:470.34px;font-size:12px;line-height:15px;color:#000;letter-spacing:-0.120px;word-spacing:0.120px;width:85.6px;overflow:hidden;">Windows (C:)</div>
<div class="t" style="left:55.4px;top:494.34px;font-size:12px;line-height:15px;color:#000;letter-spacing:-0.688px;word-spacing:0.688px;width:85.6px;overflow:hidden;">Jeux 1 (D:)</div>
<div class="t" style="left:55.4px;top:518.34px;font-size:12px;line-height:15px;color:#000;letter-spacing:-0.552px;word-spacing:0.552px;width:85.6px;overflow:hidden;">Docs (E:)</div>
<div class="t" style="left:55.4px;top:542.34px;font-size:12px;line-height:15px;color:#000;letter-spacing:-0.540px;word-spacing:0.540px;width:85.6px;overflow:hidden;">Jeux 2 (F:)</div>
<div class="t" style="left:55.4px;top:566.34px;font-size:12px;line-height:15px;color:#000;letter-spacing:-0.075px;word-spacing:0.075px;width:85.6px;overflow:hidden;">Applications (G:)</div>
<div class="t" style="left:55.4px;top:590.34px;font-size:12px;line-height:15px;color:#000;letter-spacing:-0.097px;word-spacing:0.097px;width:85.6px;overflow:hidden;">VIrtualbox (H:)</div>
<div class="t" style="left:16.8px;top:615.34px;font-size:12px;line-height:15px;color:#000;letter-spacing:-0.323px;word-spacing:0.323px;">14 élément(s)</div>
<div class="t" style="left:183.5px;top:106.30px;font-size:15px;line-height:19px;color:#1f3aa6;letter-spacing:-0.414px;word-spacing:0.414px;-webkit-text-stroke:0;">Dossiers (7)</div>
<div class="t" style="left:183.4px;top:301.30px;font-size:15px;line-height:19px;color:#1f3aa6;letter-spacing:-0.248px;word-spacing:0.248px;-webkit-text-stroke:0;">Périphériques et lecteurs (6)</div>
<div class="t" style="left:183.4px;top:440.30px;font-size:15px;line-height:19px;color:#1f3aa6;letter-spacing:-0.321px;word-spacing:0.321px;-webkit-text-stroke:0;">Emplacements réseau (1)</div>
<div class="t" style="left:233px;top:141.34px;font-size:12px;line-height:15px;color:#000;letter-spacing:-0.417px;word-spacing:0.417px;">Bureau</div>
<div class="t" style="left:487px;top:141.34px;font-size:12px;line-height:15px;color:#000;letter-spacing:-0.056px;word-spacing:0.056px;">Documents</div>
<div class="t" style="left:741px;top:141.34px;font-size:12px;line-height:15px;color:#000;letter-spacing:-0.293px;word-spacing:0.293px;">Images</div>
<div class="t" style="left:233px;top:197.34px;font-size:12px;line-height:15px;color:#000;letter-spacing:0.020px;word-spacing:-0.020px;">Musique</div>
<div class="t" style="left:487px;top:197.34px;font-size:12px;line-height:15px;color:#000;letter-spacing:-0.357px;word-spacing:0.357px;">Objets 3D</div>
<div class="t" style="left:741px;top:197.34px;font-size:12px;line-height:15px;color:#000;letter-spacing:-0.261px;word-spacing:0.261px;">Téléchargements</div>
<div class="t" style="left:233px;top:253.34px;font-size:12px;line-height:15px;color:#000;letter-spacing:-0.331px;word-spacing:0.331px;">Vidéos</div>
<div class="t" style="left:233px;top:330.34px;font-size:12px;line-height:15px;color:#000;letter-spacing:-0.120px;word-spacing:0.120px;">Windows (C:)</div>
<div class="t" style="left:233px;top:360.34px;font-size:12px;line-height:15px;color:#6a6a6a;letter-spacing:-0.521px;word-spacing:0.521px;-webkit-text-stroke:0.05px currentColor;">94,8 Go libres sur 199 Go</div>
<div class="t" style="left:487px;top:330.34px;font-size:12px;line-height:15px;color:#000;letter-spacing:-0.688px;word-spacing:0.688px;">Jeux 1 (D:)</div>
<div class="t" style="left:487px;top:360.34px;font-size:12px;line-height:15px;color:#6a6a6a;letter-spacing:-0.506px;word-spacing:0.506px;-webkit-text-stroke:0.05px currentColor;">52,4 Go libres sur 275 Go</div>
<div class="t" style="left:741px;top:330.34px;font-size:12px;line-height:15px;color:#000;letter-spacing:-0.552px;word-spacing:0.552px;">Docs (E:)</div>
<div class="t" style="left:741px;top:360.34px;font-size:12px;line-height:15px;color:#6a6a6a;letter-spacing:-0.488px;word-spacing:0.488px;-webkit-text-stroke:0.05px currentColor;">283 Go libres sur 299 Go</div>
<div class="t" style="left:233px;top:386.34px;font-size:12px;line-height:15px;color:#000;letter-spacing:-0.540px;word-spacing:0.540px;">Jeux 2 (F:)</div>
<div class="t" style="left:233px;top:416.34px;font-size:12px;line-height:15px;color:#6a6a6a;letter-spacing:-0.441px;word-spacing:0.441px;-webkit-text-stroke:0.05px currentColor;">311 Go libres sur 941 Go</div>
<div class="t" style="left:487px;top:386.34px;font-size:12px;line-height:15px;color:#000;letter-spacing:-0.075px;word-spacing:0.075px;">Applications (G:)</div>
<div class="t" style="left:487px;top:416.34px;font-size:12px;line-height:15px;color:#6a6a6a;letter-spacing:-0.488px;word-spacing:0.488px;-webkit-text-stroke:0.05px currentColor;">269 Go libres sur 320 Go</div>
<div class="t" style="left:741px;top:386.34px;font-size:12px;line-height:15px;color:#000;letter-spacing:-0.061px;word-spacing:0.061px;">VIrtualbox (H:)</div>
<div class="t" style="left:741px;top:416.34px;font-size:12px;line-height:15px;color:#6a6a6a;letter-spacing:-0.441px;word-spacing:0.441px;-webkit-text-stroke:0.05px currentColor;">118 Go libres sur 299 Go</div>
<div class="t" style="left:233.5px;top:475.34px;font-size:12px;line-height:15px;color:#000;letter-spacing:-0.477px;word-spacing:0.477px;">Freebox Server</div>
</body></html>
